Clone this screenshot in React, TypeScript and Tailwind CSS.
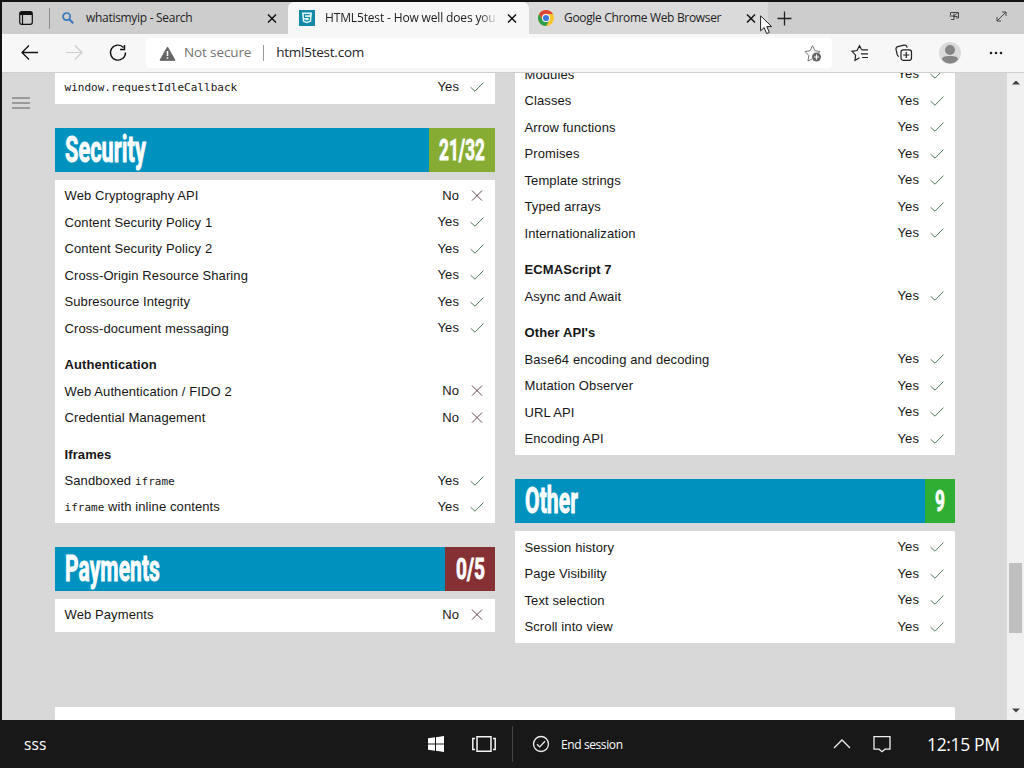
import React from "react";

interface Row {
  name: React.ReactNode;
  result?: "Yes" | "No";
}

const Mono = ({ children }: { children: React.ReactNode }) => (
  <code className="font-['DejaVu_Sans_Mono',monospace] text-[11px] tracking-[0.02px]">{children}</code>
);

const idleRows: Row[] = [{ name: <Mono>window.requestIdleCallback</Mono>, result: "Yes" }];

const securityRows: Row[] = [
  { name: "Web Cryptography API", result: "No" },
  { name: "Content Security Policy 1", result: "Yes" },
  { name: "Content Security Policy 2", result: "Yes" },
  { name: "Cross-Origin Resource Sharing", result: "Yes" },
  { name: "Subresource Integrity", result: "Yes" },
  { name: "Cross-document messaging", result: "Yes" },
  { name: "Authentication" },
  { name: "Web Authentication / FIDO 2", result: "No" },
  { name: "Credential Management", result: "No" },
  { name: "Iframes" },
  { name: <>Sandboxed <Mono>iframe</Mono></>, result: "Yes" },
  { name: <><Mono>iframe</Mono> with inline contents</>, result: "Yes" },
];

const paymentRows: Row[] = [{ name: "Web Payments", result: "No" }];

const scriptRows: Row[] = [
  { name: "Modules", result: "Yes" },
  { name: "Classes", result: "Yes" },
  { name: "Arrow functions", result: "Yes" },
  { name: "Promises", result: "Yes" },
  { name: "Template strings", result: "Yes" },
  { name: "Typed arrays", result: "Yes" },
  { name: "Internationalization", result: "Yes" },
  { name: "ECMAScript 7" },
  { name: "Async and Await", result: "Yes" },
  { name: "Other API's" },
  { name: "Base64 encoding and decoding", result: "Yes" },
  { name: "Mutation Observer", result: "Yes" },
  { name: "URL API", result: "Yes" },
  { name: "Encoding API", result: "Yes" },
];

const otherRows: Row[] = [
  { name: "Session history", result: "Yes" },
  { name: "Page Visibility", result: "Yes" },
  { name: "Text selection", result: "Yes" },
  { name: "Scroll into view", result: "Yes" },
];

const Mark = ({ ok }: { ok: boolean }) => (
  <svg width="14" height="14" viewBox="0 0 14 14" fill="none" strokeWidth="1" className="ml-[11px] shrink-0">
    {ok ? (
      <path d="M.6 7.200l4.400 4L13.400 2.600" stroke="#557a5a" />
    ) : (
      <path d="M2 1.600l10 10M12 1.600l-10 10" stroke="#684650" />
    )}
  </svg>
);

const Card = ({ rows, className = "" }: { rows: Row[]; className?: string }) => (
  <div className={`bg-white px-[9.5px] py-[3px] flex flex-col overflow-hidden shrink-0 ${className}`}>
    {rows.map((row, i) =>
      row.result ? (
        <div key={i} className="h-[26.5px] shrink-0 flex items-center justify-between">
          <span>{row.name}</span>
          <span className="flex items-center pr-[1.5px] relative -top-[0.7px]">
            {row.result}
            <Mark ok={row.result === "Yes"} />
          </span>
        </div>
      ) : (
        <div key={i} className="h-[26.5px] mt-2.5 shrink-0 flex items-center font-bold">
          {row.name}
        </div>
      )
    )}
  </div>
);

const Condensed = ({ text, size, length, y }: { text: string; size: number; length: number; y: number }) => (
  <svg width={length} height="44" className="overflow-visible shrink-0">
    <text
      x="0"
      y={y}
      fill="#fff"
      stroke="#fff"
      strokeWidth="0.9"
      fontFamily="Roboto, sans-serif"
      fontWeight="700"
      fontSize={size}
      textLength={length}
      lengthAdjust="spacingAndGlyphs"
    >
      {text}
    </text>
  </svg>
);

interface SectionProps {
  title: string;
  titleLength: number;
  score: string;
  scoreLength: number;
  scoreClass: string;
  className?: string;
}

const SectionTitle = ({ title, titleLength, score, scoreLength, scoreClass, className = "" }: SectionProps) => (
  <div className={`h-11 mb-2 bg-[#0092bf] pl-[9.5px] flex justify-between shrink-0 ${className}`}>
    <Condensed text={title} size={36} length={titleLength} y={34} />
    <div className={`flex justify-center ${scoreClass}`}>
      <Condensed text={score} size={30} length={scoreLength} y={32} />
    </div>
  </div>
);

const Close = () => (
  <svg width="10" height="10" viewBox="0 0 10 10" stroke="#111" strokeWidth="1.5" className="shrink-0">
    <path d="M1 1.500l8 8M9 1.500l-8 8" />
  </svg>
);

const TabBar = () => (
  <div className="h-8 bg-[#cdcdcd] flex items-stretch text-xs text-[#222] shrink-0">
    <div className="w-[47px] flex items-center pl-[17px] shrink-0">
      <svg width="14" height="14" viewBox="0 0 14 14" fill="none" stroke="#111" strokeWidth="1.2">
        <rect x=".7" y=".7" width="12.6" height="12.6" rx="2" />
        <path d="M1 2.5h12" strokeWidth="3" />
        <path d="M3.5 3v10" />
      </svg>
    </div>
    <div className="w-px h-[21px] self-center bg-[#8b8b8b]" />
    <div className="w-[236px] pl-3 pr-[9px] flex items-center">
      <svg width="12" height="12" viewBox="0 0 12 12" fill="none" stroke="#3878be" strokeWidth="1.7">
        <circle cx="4.6" cy="4.6" r="3.6" />
        <path d="M7.2 7.2l4 4" strokeWidth="2" />
      </svg>
      <span className="ml-3 flex-1 whitespace-nowrap tracking-[-0.3px]">whatismyip - Search</span>
      <Close />
    </div>
    <div className="w-[241px] ml-0.5 bg-[#f7f7f7] rounded-t-md pl-[11px] pr-[12px] flex items-center shrink-0">
      <svg width="16" height="16" viewBox="0 0 16 16" className="shrink-0">
        <path fill="#148aa8" d="M0 0h16v16H0z" />
        <path fill="#dff5fa" d="M3 2.5h10l-.9 9.3L8 13.3l-4.1-1.5z" />
        <path d="M10.8 4.7H5.4l.2 2.8h4.8l-.3 2.8-2.1.7-2.1-.7-.1-1" fill="none" stroke="#148aa8" strokeWidth="1.2" />
      </svg>
      <span className="ml-[10px] w-[172px] whitespace-nowrap tracking-[-0.15px] [mask-image:linear-gradient(to_right,#000_155px,transparent_173px)]">
        HTML5test - How well does you
      </span>
      <span className="ml-auto flex"><Close /></span>
    </div>
    <div className="w-[239px] bg-[#dadada] pl-[9px] pr-[12px] flex items-center shrink-0">
      <svg width="16" height="16" viewBox="0 0 16 16" className="shrink-0">
        <circle cx="8" cy="8" r="8" fill="#f5c52c" />
        <path fill="#de463b" d="M1.1 4A8 8 0 0 1 14.9 4H8a4 4 0 0 0-3.5 6z" />
        <path fill="#2c9b4c" d="M1.1 4A8 8 0 0 0 8 16l3.5-6a4 4 0 0 1-7 0z" />
        <circle cx="8" cy="8" r="4" fill="#fff" />
        <circle cx="8" cy="8" r="3.1" fill="#3f79d8" />
      </svg>
      <span className="ml-[10px] flex-1 whitespace-nowrap tracking-[-0.33px]">Google Chrome Web Browser</span>
      <Close />
    </div>
    <div className="flex-1 flex items-center pl-[9px] pr-[17px]">
      <svg width="15" height="15" viewBox="0 0 15 15" stroke="#222" strokeWidth="1.3">
        <path d="M7.5 .5v14M.5 7.5h14" />
      </svg>
      <svg width="11" height="10" viewBox="0 0 11 10" fill="none" stroke="#444" className="ml-auto mr-px mb-1">
        <path d="M1.500 4V1.500h8v5.500H7M.5 5h4.500v3.500h-3M4 6l5-4.500M5 2.500v3h3.500" strokeWidth="1" />
      </svg>
      <svg width="11" height="11" viewBox="0 0 11 11" fill="none" stroke="#444" className="ml-[35px] mb-1">
        <path d="M1 10l9-9M6 1h4v4M1 6v4h4" />
      </svg>
    </div>
  </div>
);

const Toolbar = () => (
  <div className="h-[39px] bg-[#f7f7f7] border-b border-[#cfcfcf] flex items-center shrink-0 text-sm">
    <svg width="126" height="20" viewBox="0 0 126 20" fill="none" className="mr-[18px] shrink-0">
      <path d="M27 3l-7 7 7 7M20.5 10H36" stroke="#111" strokeWidth="1.3" transform="translate(0 -.5)" />
      <path d="M73 3l7 7-7 7M64 10h15.5" stroke="#ccc" strokeWidth="1.2" transform="translate(0 -.5)" />
      <path d="M121.500 4.500A7.500 7.500 0 1 0 123.500 9.500M122.500 2v4.500H118" stroke="#111" strokeWidth="1.4" />
    </svg>
    <div className="h-[30px] w-[686px] bg-white rounded-sm flex items-center pl-[13px] pr-[10px] shrink-0">
      <svg width="17" height="15" viewBox="0 0 17 15">
        <path d="M8.500 1L16 14.300H1z" fill="#666" stroke="#666" strokeLinejoin="round" />
        <path d="M8.500 5v5M8.500 11.200v1.600" stroke="#fff" strokeWidth="1.6" />
      </svg>
      <span className="ml-[8px] text-[#737373] text-[13.5px] tracking-[-0.12px]">Not secure</span>
      <div className="w-px h-4 bg-[#999] mx-[12px]" />
      <span className="text-[#252525] text-[13.5px] tracking-[-0.25px]">html5test.com</span>
      <svg width="18" height="18" viewBox="0 0 18 18" fill="none" stroke="#777" className="ml-auto">
        <path d="M8 15l-4 2 .8-5.500L1 7.500l5-.8 2.500-5 2.500 5 5 .8-2 2" />
        <circle cx="12.500" cy="13" r="4.500" fill="#666" stroke="none" />
        <path d="M10 13h5M12.500 10.500v5" stroke="#fff" strokeWidth="1.2" />
      </svg>
    </div>
    <svg width="18" height="18" viewBox="0 0 18 18" fill="none" stroke="#222" strokeWidth="1.2" className="ml-[19px]">
      <path d="M10.500 5.500L8.500 1.700 6 6.500l-5 .8 3.600 3.800L4 16.300l4.500-2.500M10.500 5.800H17M10 9.800h7M11 13.500h6" />
    </svg>
    <svg width="18" height="18" viewBox="0 0 18 18" fill="none" stroke="#222" strokeWidth="1.2" className="ml-[26px]">
      <path d="M4 12.500c-1-.2-1.500-.8-1.800-1.800L1 5.500C.8 4 1.300 3 2.800 2.600L9 1.200c1.500-.3 2.500.3 3 1.800l.2.700" />
      <rect x="6" y="5.800" width="10.500" height="10.500" rx="2.200" />
      <path d="M11.250 8v6M8.250 11h6" />
    </svg>
    <svg width="22" height="22" viewBox="0 0 22 22" className="ml-[26px]">
      <circle cx="11" cy="11" r="11" fill="#dadada" />
      <circle cx="11" cy="8" r="5" fill="#858585" />
      <path d="M3 17.500c0-2.500 2.500-3.500 8-3.500s8 1 8 3.500c-2 2.500-5 4-8 4s-6-1.500-8-4z" fill="#858585" />
    </svg>
    <svg width="14" height="4" viewBox="0 0 14 4" fill="#222" className="ml-[28px]">
      <circle cx="2" cy="2" r="1.300" /><circle cx="7" cy="2" r="1.300" /><circle cx="12" cy="2" r="1.300" />
    </svg>
  </div>
);

const Taskbar = () => (
  <div className="h-12 bg-[#181818] text-white flex items-center shrink-0">
    <span className="ml-6 w-[403px] pt-0.5 text-[15.5px] tracking-[0.1px]">sss</span>
    <svg width="16" height="16" viewBox="0 0 16 16" fill="#fff" className="ml-px">
      <path d="M0 2.300l7-1v6.200H0zM8 1.200L16 0v7.500H8zM0 8.500h7v6.200l-7-1zM8 8.500h8V16l-8-1.200z" />
    </svg>
    <svg width="24" height="16" viewBox="0 0 24 16" fill="none" stroke="#f4f4f4" strokeWidth="1.500" className="ml-[28px]">
      <path d="M5 .8h14v14.400H5zM3 2.500H.8v11H3M21 2.500h2.200v11H21" />
    </svg>
    <div className="w-px h-9 bg-[#454545] ml-4" />
    <svg width="18" height="18" viewBox="0 0 18 18" fill="none" stroke="#eee" strokeWidth="1.300" className="ml-[19px]">
      <circle cx="9" cy="9" r="7.500" />
      <path d="M5 9.200l2.700 2.700L13 6.300" />
    </svg>
    <span className="ml-[11px] pt-0.5 text-xs tracking-[-0.4px]">End session</span>
    <svg width="18" height="10" viewBox="0 0 18 10" fill="none" stroke="#eee" strokeWidth="1.300" className="ml-auto">
      <path d="M1 9l8-8 8 8" />
    </svg>
    <svg width="18" height="18" viewBox="0 0 18 18" fill="none" stroke="#eee" strokeWidth="1.300" className="ml-[22px]">
      <path d="M1 1.700h16v12.500h-5l-3 2.500-3-2.500H1z" />
    </svg>
    <span className="ml-[36px] mr-[23px] w-[74px] whitespace-nowrap text-[17.5px] tracking-[-0.35px]">12:15 PM</span>
  </div>
);

const App = () => {
  return (
    <div className="w-[1024px] h-[768px] bg-[#121212] pt-0.5 flex flex-col overflow-hidden relative font-['Open_Sans','Noto_Sans',sans-serif]">
      <div className="ml-0.5 flex-1 min-h-0 flex flex-col">
        <TabBar />
        <Toolbar />

        <div className="flex-1 min-h-0 flex bg-[#d8d8d8] overflow-hidden font-['Liberation_Sans',Arial,sans-serif] text-[13px] leading-[18px] tracking-[0.1px] text-[#161616]">
          {/* Menu handle */}
          <div className="w-[53px] shrink-0 pt-[24px] pl-[9.5px] flex flex-col gap-[3px]">
            <div className="w-[18px] h-0.5 bg-[#9b9b9b]" />
            <div className="w-[18px] h-0.5 bg-[#9b9b9b]" />
            <div className="w-[18px] h-0.5 bg-[#9b9b9b]" />
          </div>

          <div className="w-[900px] shrink-0 flex flex-col">
            <div className="h-[634px] shrink-0 grid grid-cols-2 gap-5">
              <div className="flex flex-col">
                <Card rows={idleRows} className="h-[31px] pt-[1.5px]" />
                <SectionTitle title="Security" titleLength={81} score="21/32" scoreLength={46} scoreClass="w-[66px] bg-[#87ac34]" className="mt-6" />
                <Card rows={securityRows} className="h-[343px]" />
                <SectionTitle title="Payments" titleLength={95} score="0/5" scoreLength={29} scoreClass="w-[50px] bg-[#853033]" className="mt-6" />
                <Card rows={paymentRows} className="h-[33px]" />
              </div>
              <div className="flex flex-col">
                <Card rows={scriptRows} className="h-[382px] justify-end pb-[2.5px]" />
                <SectionTitle title="Other" titleLength={53} score="9" scoreLength={10} scoreClass="w-[30px] bg-[#30ae34]" className="mt-6" />
                <Card rows={otherRows} className="h-[112px] pt-[3.5px]" />
              </div>
            </div>
            <div className="flex-1 bg-white" />
          </div>

          {/* Scrollbar */}
          <div className="ml-auto w-[17px] bg-[#f0f0f0] flex flex-col items-center shrink-0">
            <svg width="8" height="5" viewBox="0 0 8 5" fill="#444" className="mt-[7px]">
              <path d="M0 4.500L4 .5l4 4z" />
            </svg>
            <div className="mt-[478px] w-[13px] h-[70px] bg-[#bfbfbf]" />
            <svg width="8" height="5" viewBox="0 0 8 5" fill="#444" className="mt-auto mb-[7px]">
              <path d="M0 .5l4 4 4-4z" />
            </svg>
          </div>
        </div>
      </div>

      <Taskbar />

      {/* Mouse pointer */}
      <svg width="13" height="20" viewBox="0 0 13 20" className="absolute left-[760px] top-[15px]">
        <path d="M.6 .8v15l3.500-3.300 2.500 6 2.700-1.100-2.500-5.800h4.900z" fill="#fff" stroke="#222" />
      </svg>
    </div>
  );
};

export default App;
